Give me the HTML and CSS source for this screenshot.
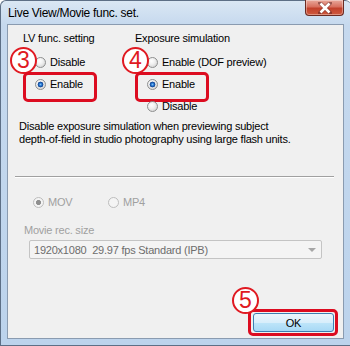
FILE: index.html
```html
<!DOCTYPE html>
<html>
<head>
<meta charset="utf-8">
<link rel="stylesheet" href="styles.css">
</head>
<body>
<div class="window">
  <div class="titlebar">
    <span class="title">Live View/Movie func. set.</span>
    <div class="close"><svg width="14" height="12" viewBox="0 0 14 12"><path d="M2 1 L12 11 M12 1 L2 11" stroke="#5a2020" stroke-width="4" stroke-linecap="square" opacity="0.5"/><path d="M2.5 1.5 L11.5 10.5 M11.5 1.5 L2.5 10.5" stroke="#fff" stroke-width="2.6"/></svg></div>
  </div>
  <div class="panel">
    <div class="options">
      <div class="col col-lv">
        <div class="label">LV func. setting</div>
        <div class="row"><span class="num n-a">3</span><span class="radio"></span>Disable</div>
        <div class="row hl"><span class="radio on"></span>Enable</div>
      </div>
      <div class="col col-exp">
        <div class="label">Exposure simulation</div>
        <div class="row"><span class="num n-a">4</span><span class="radio"></span>Enable (DOF preview)</div>
        <div class="row hl"><span class="radio on"></span>Enable</div>
        <div class="row"><span class="radio"></span>Disable</div>
      </div>
    </div>
    <p class="desc">Disable exposure simulation when previewing subject<br>depth-of-field in studio photography using large flash units.</p>
    <div class="sep"></div>
    <div class="formats">
      <div class="row dis"><span class="radio on dim"></span>MOV</div>
      <div class="row dis"><span class="radio dim"></span>MP4</div>
    </div>
    <div class="sizelabel">Movie rec. size</div>
    <div class="select"><span>1920x1080&nbsp;&nbsp;29.97 fps Standard (IPB)</span><span class="arrow"></span></div>
    <div class="footer">
      <div class="okwrap"><span class="num n-ok">5</span><div class="ok">OK</div></div>
    </div>
  </div>
</div>
</body>
</html>
```
FILE: styles.css
```css
* { box-sizing: border-box; }
html, body { margin: 0; padding: 0; }
body {
  width: 350px; height: 346px; overflow: hidden;
  font-family: "Liberation Sans", Arial, sans-serif;
  font-size: 11px; color: #000; letter-spacing: -0.22px;
  background: #fff;
}
.window {
  width: 351px; height: 346px;
  background: linear-gradient(180deg, #dae7f4 0px, #c6d9ee 24px, #bcd3ec 100%);
  border: 1px solid #5d6f86;
  border-right: none;
  border-radius: 6px 6px 0 0;
  display: flex; flex-direction: column;
  padding: 0 7px 6px 6px;
}
.titlebar {
  height: 23px; display: flex; align-items: flex-start; justify-content: space-between;
  position: relative;
}
.title {
  font-size: 12px; margin: 5px 0 0 1px; color: #000; letter-spacing: -0.3px;
}
.close {
  width: 39px; height: 16px; margin-top: -1px;
  background: linear-gradient(180deg, #e9a99c 0%, #d8705f 45%, #c2412c 55%, #cf5a3e 100%);
  border: 1px solid #6b2b22;
  border-top: none;
  border-radius: 0 0 4px 4px;
  display: flex; align-items: center; justify-content: center;
  box-shadow: inset 0 0 0 1px rgba(255,255,255,0.35);
}
.panel {
  flex: 1;
  background: #f0f0f0;
  border: 1px solid #8a9bb0;
  display: flex; flex-direction: column;
  padding: 0 0 0 15px;
  position: relative;
}
.options { display: flex; margin-top: 6px; }
.col-lv { width: 112px; }
.label { height: 14px; line-height: 14px; }
.row {
  position: relative; height: 22px; display: flex; align-items: center;
  margin-left: 12px;
}
.label + .row { margin-top: 6px; }
.row .radio { margin-right: 4px; }
.radio {
  width: 11px; height: 11px; border-radius: 50%;
  border: 1px solid #8e8f8f;
  background: radial-gradient(circle at 40% 35%, #ffffff 0%, #f0f0f0 40%, #c9c9c9 100%);
  display: inline-block; flex: none;
}
.radio.on {
  background:
    radial-gradient(circle at 50% 50%, #7ec0f5 0, #2a7ad4 1.3px, #0f3f8c 2.6px, transparent 3.2px),
    radial-gradient(circle at 40% 35%, #ffffff 0%, #f0f0f0 40%, #c9c9c9 100%);
}
.radio.dim { border-color: #bdbdbd; background: #f4f4f4; }
.radio.on.dim {
  background:
    radial-gradient(circle at 50% 50%, #8f8f8f 0, #8f8f8f 2.2px, transparent 2.9px),
    #f4f4f4;
}
.hl::after {
  content: ""; position: absolute;
  left: -12px; top: -1px; width: 68px; height: 24px;
  border: 3px solid #dc0c20; border-radius: 5px;
}
.num {
  position: absolute; width: 27px; height: 27px; border-radius: 50%;
  border: 2px solid #e01a22; background: #fff; color: #e01a22;
  font-size: 23px; line-height: 23px; text-align: center; letter-spacing: 0;
  font-family: "Liberation Sans", Arial, sans-serif;
}
.n-a { left: -25px; top: -4px; }
.desc { margin: 3px 0 0 -4px; line-height: 13px; }
.sep {
  margin: 30px 9px 0 -8px; height: 2px;
  border-top: 1px solid #a0a0a0; border-bottom: 1px solid #fff;
}
.formats { display: flex; margin-top: 13px; margin-left: -2px; }
.formats .row { margin-left: 12px; width: 63px; }
.dis { color: #a0a0a0; }
.sizelabel { color: #a0a0a0; margin: 11px 0 0 1px; height: 13px; line-height: 13px; }
.select {
  margin: 3px 0 0 6px; width: 293px; height: 19px;
  border: 1px solid #c4c4c4; border-radius: 2px;
  background: #f4f4f4; color: #6d6d6d;
  display: flex; align-items: center; justify-content: space-between;
  padding: 0 5px 0 4px;
}
.arrow {
  width: 0; height: 0; border-left: 4px solid transparent; border-right: 4px solid transparent;
  border-top: 4px solid #a6a6a6;
}
.footer { flex: 1; display: flex; justify-content: flex-end; align-items: flex-end; padding: 0 9px 6px 0; }
.okwrap { position: relative; }
.okwrap::after {
  content: ""; position: absolute; left: -5px; top: -4px; right: -4px; bottom: -4px;
  border: 3px solid #dc0c20; border-radius: 5px;
}
.ok {
  width: 81px; height: 19px; border: 1px solid #3c7fb1; border-radius: 3px;
  background: linear-gradient(180deg, #ecf6fd 0%, #d8eefb 50%, #bee5f9 51%, #a8d9f5 100%);
  display: flex; align-items: center; justify-content: center; font-size: 11px;
}
.n-ok { left: -21px; top: -26px; z-index: 1; }
```
